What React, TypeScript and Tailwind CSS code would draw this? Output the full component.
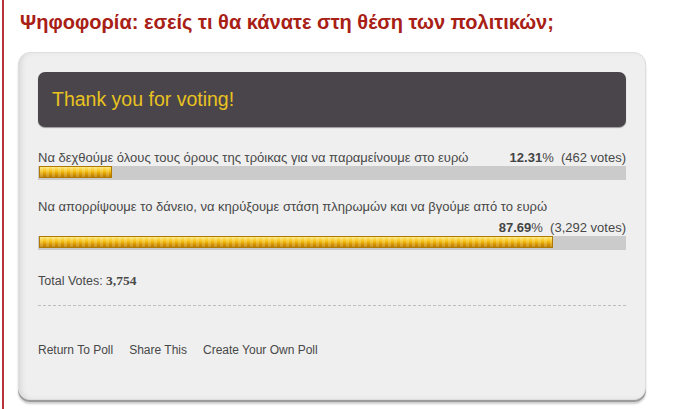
import React from "react";

const barFill =
  "h-[12px] mt-px ml-px border border-[#b07a00] bg-[repeating-linear-gradient(90deg,rgba(255,255,255,0.18)_0px,rgba(255,255,255,0.18)_3px,transparent_3px,transparent_6px),linear-gradient(to_bottom,#fde878,#f2bd10_45%,#d99a00_70%,#b87a00)]";

function Answer({
  label,
  pct,
  votes,
  width,
  wrap,
}: {
  label: string;
  pct: string;
  votes: string;
  width: number;
  wrap?: boolean;
}) {
  const stat = (
    <span className="whitespace-nowrap">
      <b className="font-bold text-[#444]">{pct}</b>%&nbsp; ({votes})
    </span>
  );
  return (
    <div>
      {wrap ? (
        <>
          <div className="leading-[15px]">{label}</div>
          <div className="text-right leading-[15px] mt-[6px]">{stat}</div>
        </>
      ) : (
        <div className="flex justify-between leading-[15px]">
          <span>{label}</span>
          {stat}
        </div>
      )}
      <div className="h-[14px] bg-[#cbcbcb] mt-[1px]">
        <div className={barFill} style={{ width }} />
      </div>
    </div>
  );
}

export default function App() {
  return (
    <div className="w-[693px] h-[409px] bg-white overflow-hidden border-l-2 border-[#b8323a] ml-[2px] font-['Liberation_Sans',Arial,sans-serif]">
      <h1 className="text-[20px] font-bold text-[#a82015] pl-[16px] pt-[11px] leading-[22px]">
        Ψηφοφορία: εσείς τι θα κάνατε στη θέση των πολιτικών;
      </h1>
      <div className="ml-[14px] mt-[19px] w-[628px] h-[348px] rounded-[12px] bg-[#efefef] border border-[#dedede] shadow-[inset_4px_0_6px_-3px_#cfcfcf,0_2px_0_#9c9c9c,0_4px_2px_#cfcfcf] px-[19px] pt-[19px] text-[13px] text-[#484848]">
        <div className="h-[55px] rounded-[7px] bg-[#4a454b] shadow-[0_1px_1px_#9a9a9a] flex items-center pl-[14px]">
          <span className="text-[19.5px] text-[#e9c21f]">Thank you for voting!</span>
        </div>
        <div className="mt-[23px] flex flex-col gap-[19px]">
          <Answer
            label="Να δεχθούμε όλους τους όρους της τρόικας για να παραμείνουμε στο ευρώ"
            pct="12.31"
            votes="462 votes"
            width={73}
          />
          <Answer
            label="Να απορρίψουμε το δάνειο, να κηρύξουμε στάση πληρωμών και να βγούμε από το ευρώ"
            pct="87.69"
            votes="3,292 votes"
            width={514}
            wrap
          />
        </div>
        <div className="mt-[23px] leading-[15px] text-[12.5px]">
          Total Votes: <b className="font-bold font-['Liberation_Serif',serif] text-[13.5px]">3,754</b>
        </div>
        <div className="mt-[16px] border-t border-dashed border-[#bdbdbd]" />
        <div className="mt-[37px] flex gap-[16px] leading-[15px] text-[12px]">
          <span>Return To Poll</span>
          <span>Share This</span>
          <span>Create Your Own Poll</span>
        </div>
      </div>
    </div>
  );
}
